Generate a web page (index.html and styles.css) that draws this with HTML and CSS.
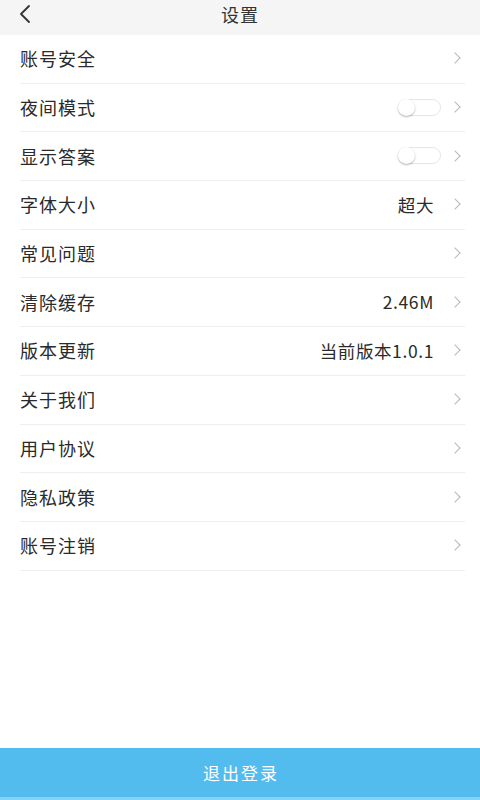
FILE: index.html
```html
<!DOCTYPE html>
<html lang="zh">
<head>
<meta charset="utf-8">
<link rel="stylesheet" href="styles.css">
</head>
<body>
<div class="page">
  <header class="topbar">
    <svg class="back" width="14" height="20" viewBox="0 0 14 20"><path d="M11 2 L3 10 L11 18" fill="none" stroke="#333" stroke-width="1.8" stroke-linecap="round" stroke-linejoin="round"/></svg>
    <div class="title">设置</div>
  </header>
  <ul class="list">
    <li class="row"><span class="label">账号安全</span><span class="right"><i class="chev"></i></span></li>
    <li class="row"><span class="label">夜间模式</span><span class="right"><span class="toggle"><span class="knob"></span></span><i class="chev"></i></span></li>
    <li class="row"><span class="label">显示答案</span><span class="right"><span class="toggle"><span class="knob"></span></span><i class="chev"></i></span></li>
    <li class="row"><span class="label">字体大小</span><span class="right"><span class="value">超大</span><i class="chev"></i></span></li>
    <li class="row"><span class="label">常见问题</span><span class="right"><i class="chev"></i></span></li>
    <li class="row"><span class="label">清除缓存</span><span class="right"><span class="value">2.46M</span><i class="chev"></i></span></li>
    <li class="row"><span class="label">版本更新</span><span class="right"><span class="value">当前版本1.0.1</span><i class="chev"></i></span></li>
    <li class="row"><span class="label">关于我们</span><span class="right"><i class="chev"></i></span></li>
    <li class="row"><span class="label">用户协议</span><span class="right"><i class="chev"></i></span></li>
    <li class="row"><span class="label">隐私政策</span><span class="right"><i class="chev"></i></span></li>
    <li class="row"><span class="label">账号注销</span><span class="right"><i class="chev"></i></span></li>
  </ul>
  <div class="logout">退出登录</div>
</div>
</body>
</html>
```

FILE: styles.css
```css
* { box-sizing: border-box; }
html, body { margin: 0; padding: 0; }
body {
  font-family: "Noto Sans CJK SC", "Noto Sans", sans-serif;
  color: #2a2a2a;
  background: #fff;
}
.page {
  width: 480px;
  height: 800px;
  display: flex;
  flex-direction: column;
  overflow: hidden;
}
.topbar {
  height: 35px;
  background: #f5f5f5;
  display: flex;
  align-items: center;
  justify-content: center;
  position: relative;
  flex-shrink: 0;
}
.back {
  position: absolute;
  left: 18px;
  top: 4px;
}
.title {
  font-size: 18px;
  color: #333;
  line-height: 1;
  margin-top: -8px;
  letter-spacing: 1px;
}
.list {
  list-style: none;
  margin: 0;
  padding: 0 15px 0 20px;
}
.row {
  height: 48.7px;
  border-bottom: 1px solid #eeeeee;
  display: flex;
  align-items: center;
  justify-content: space-between;
  font-size: 18px;
  padding-bottom: 1px;
}
.label { letter-spacing: 1px; }
.right {
  display: flex;
  align-items: center;
}
.value {
  font-size: 17.5px;
  letter-spacing: 0.6px;
  color: #2a2a2a;
  margin-right: 17px;
}
.chev {
  display: block;
  width: 8px;
  height: 8px;
  border-top: 1.3px solid #b8b8b8;
  border-right: 1.3px solid #b8b8b8;
  transform: rotate(45deg);
  margin-right: 6px;
}
.toggle {
  width: 43px;
  height: 17px;
  border: 1px solid #e6e6e6;
  border-radius: 9px;
  background: #fff;
  position: relative;
  margin-right: 10px;
}
.knob {
  position: absolute;
  left: -1px;
  top: -1px;
  width: 17px;
  height: 17px;
  border-radius: 50%;
  background: #fff;
  box-shadow: 0 1px 2px rgba(0,0,0,0.3);
}
.logout {
  margin-top: auto;
  height: 52px;
  background: #52bcef;
  border-bottom: 3px solid #86d1f5;
  color: #fff;
  font-size: 17px;
  display: flex;
  align-items: center;
  justify-content: center;
  letter-spacing: 2px;
  padding-left: 2px;
  flex-shrink: 0;
}
```
